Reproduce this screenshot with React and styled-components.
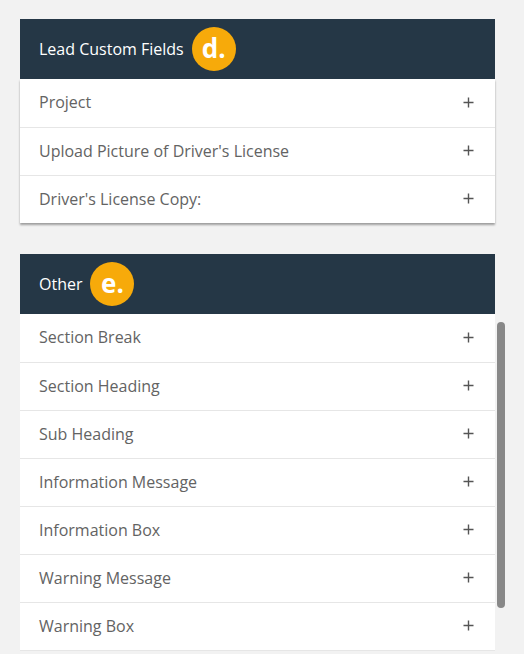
import React from "react";
import styled, { createGlobalStyle } from "styled-components";

const Global = createGlobalStyle`
  html, body { margin: 0; padding: 0; background: #f2f2f2; height: 654px; overflow: hidden; }
  body { font-family: "Open Sans", "Noto Sans", sans-serif; }
`;

const Page = styled.div`
  display: flex;
  flex-direction: column;
  gap: 31px;
  padding: 19px 0 0 20px;
`;

const Section = styled.section`
  width: 475px;
  display: flex;
  flex-direction: column;
`;

const Header = styled.div`
  height: 60px;
  background: #253746;
  display: flex;
  align-items: center;
  gap: 8px;
  padding-left: 19px;
  color: #fff;
  font-size: 16px;
`;

const Badge = styled.span`
  width: 44px;
  height: 44px;
  border-radius: 50%;
  background: #f7aa0a;
  color: #fff;
  font-weight: 700;
  font-size: 26px;
  display: flex;
  align-items: center;
  justify-content: center;
  line-height: 1;
  padding-bottom: 2px;
  box-sizing: border-box;
`;

const List = styled.div`
  background: #fff;
  width: 475px;
  box-shadow: ${(p) => (p.$shadow ? "0 2px 2px rgba(0,0,0,0.35)" : "none")};
  border-bottom: ${(p) => (p.$open ? "1px solid #e6e6e6" : "none")};
`;

const Row = styled.div`
  height: 48px;
  box-sizing: border-box;
  display: flex;
  align-items: center;
  justify-content: space-between;
  padding: 0 21px 2px 19px;
  color: #636363;
  font-size: 16px;
  border-top: ${(p) => (p.$first ? "none" : "1px solid #e6e6e6")};
`;

const ScrollArea = styled.div`
  display: flex;
  width: 487px;
`;

const Gutter = styled.div`
  flex: 1;
  display: flex;
  justify-content: flex-end;
  padding-right: 2px;
`;

const Thumb = styled.div`
  width: 8px;
  height: 286px;
  margin-top: 8px;
  border-radius: 4px;
  background: #888;
`;

const Plus = () => (
  <svg width="11" height="11" viewBox="0 0 11 11" aria-hidden="true">
    <path d="M5.5 0.5v10M0.5 5.5h10" stroke="#555" strokeWidth="1.4" fill="none" />
  </svg>
);

const lead = ["Project", "Upload Picture of Driver's License", "Driver's License Copy:"];
const other = [
  "Section Break",
  "Section Heading",
  "Sub Heading",
  "Information Message",
  "Information Box",
  "Warning Message",
  "Warning Box",
];

export default function App() {
  return (
    <>
      <Global />
      <Page>
        <Section>
          <Header>
            Lead Custom Fields <Badge>d.</Badge>
          </Header>
          <List $shadow>
            {lead.map((t, i) => (
              <Row key={t} $first={i === 0}>
                <span>{t}</span>
                <Plus />
              </Row>
            ))}
          </List>
        </Section>
        <Section>
          <Header>
            Other <Badge>e.</Badge>
          </Header>
          <ScrollArea>
            <List $open>
              {other.map((t, i) => (
                <Row key={t} $first={i === 0}>
                  <span>{t}</span>
                  <Plus />
                </Row>
              ))}
            </List>
            <Gutter>
              <Thumb />
            </Gutter>
          </ScrollArea>
        </Section>
      </Page>
    </>
  );
}
